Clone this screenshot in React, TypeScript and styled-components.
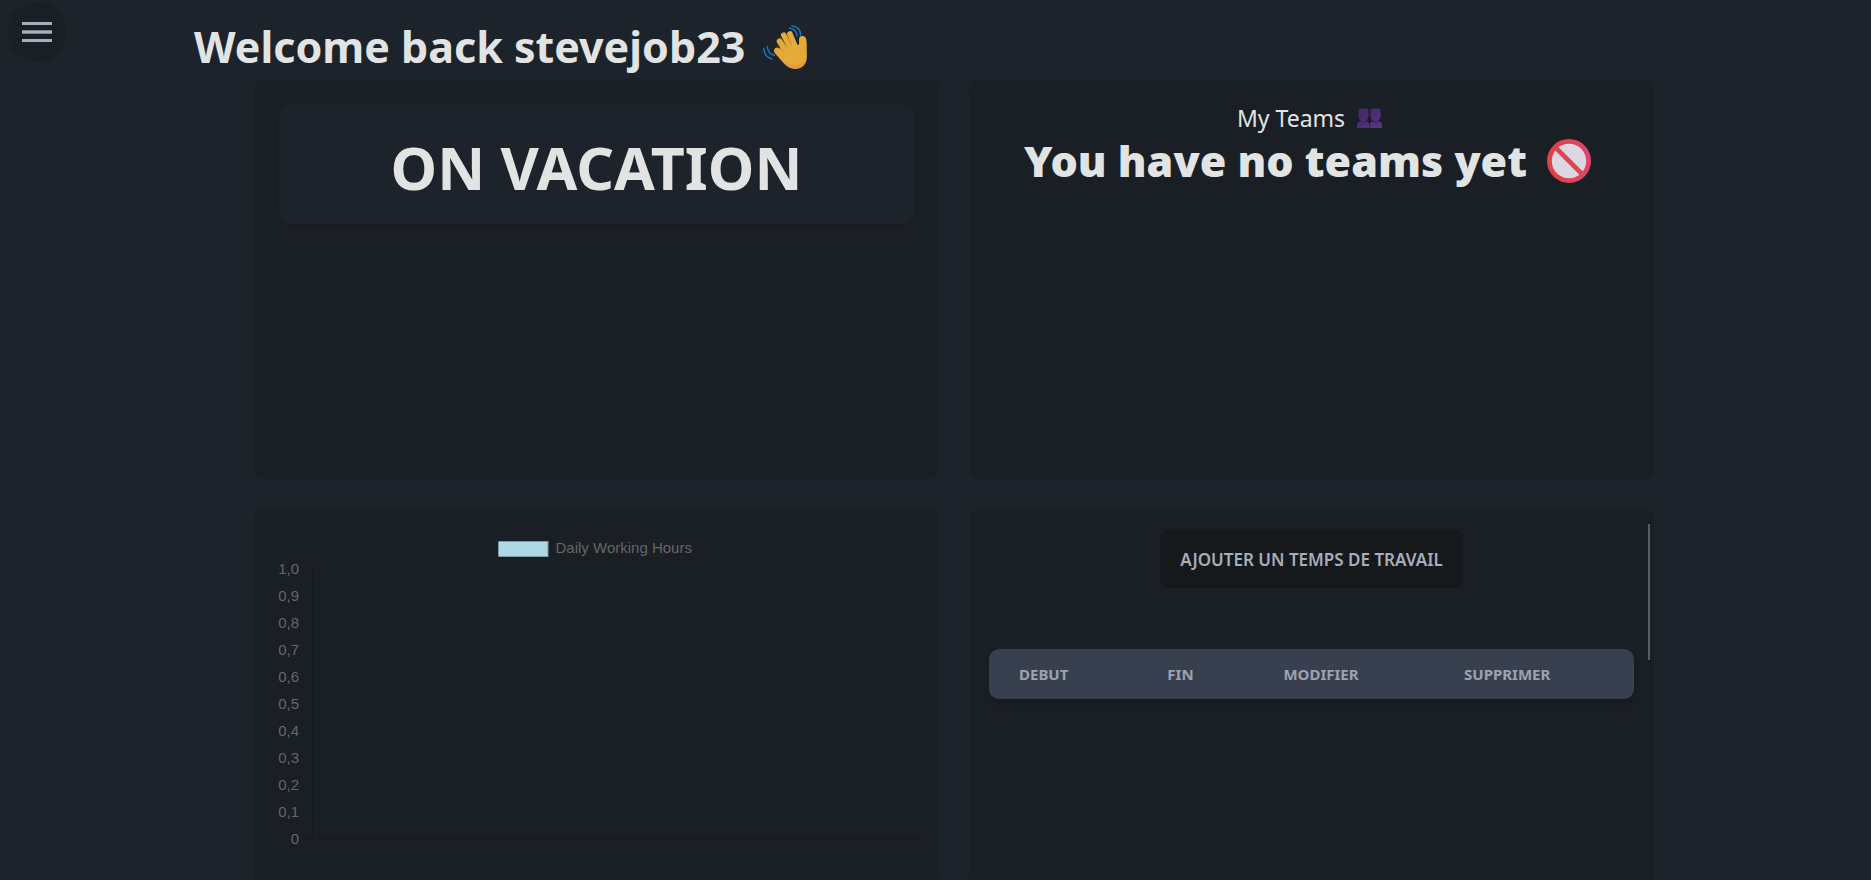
import React from 'react';
import styled, { createGlobalStyle } from 'styled-components';

const color = {
  page: '#1d232a',
  card: '#1a1e25',
  text: '#e2e4e4',
  muted: '#a6adbb',
  chartText: '#666666',
};

const GlobalStyle = createGlobalStyle`
  *, *::before, *::after { box-sizing: border-box; }
  body {
    margin: 0;
    background: ${color.page};
    color: ${color.text};
    font-family: 'Segoe UI', 'Noto Sans', sans-serif;
    font-size: 16px;
  }
`;

const Page = styled.div`
  height: 100vh;
  overflow: hidden;
  padding-left: 37px;
  border-bottom: 1px solid ${color.card};
`;

const MenuButton = styled.button`
  position: absolute;
  top: 2px;
  left: 7px;
  width: 60px;
  height: 60px;
  padding: 0;
  border: 0;
  border-radius: 50%;
  background: ${color.card};
  display: grid;
  place-items: center;
  cursor: pointer;
`;

const Header = styled.header`
  max-width: 1520px;
  margin: 0 auto;
  padding-top: 14px;
`;

const Title = styled.h1`
  display: flex;
  align-items: center;
  gap: 18px;
  margin: 0;
  font-size: 43px;
  line-height: 65px;
  font-weight: 700;
`;

const Board = styled.main`
  display: grid;
  grid-template-columns: 1fr 1fr;
  grid-auto-rows: 400px;
  gap: 30px;
  max-width: 1400px;
  margin: 0 auto;
`;

const Card = styled.section<{ $pad: string }>`
  position: relative;
  padding: ${(p) => p.$pad};
  border-radius: 10px;
  background: ${color.card};
`;

const Status = styled.div`
  display: flex;
  justify-content: center;
  align-items: center;
  height: 120px;
  padding-top: 5px;
  border-radius: 10px;
  background: ${color.page};
  box-shadow: 0 1px 2px rgba(0, 0, 0, 0.1);
  font-size: 59px;
  font-weight: 700;
`;

const TeamsTitle = styled.h2`
  display: flex;
  justify-content: center;
  align-items: center;
  gap: 12px;
  margin: 0;
  padding-right: 4px;
  font-size: 23px;
  line-height: 36px;
  font-weight: 400;
`;

const TeamsEmpty = styled.p`
  display: flex;
  justify-content: center;
  align-items: center;
  gap: 20px;
  margin: 0;
  padding-right: 8px;
  font-size: 43px;
  line-height: 50px;
  font-weight: 900;
`;

const ChartCanvas = styled.svg`
  display: block;
  width: 100%;
  height: 340px;
  overflow: visible;

  text {
    fill: ${color.chartText};
    font-family: 'Liberation Sans', Arial, sans-serif;
    font-size: 15px;
  }
`;

const AddButton = styled.button`
  display: block;
  height: 58px;
  margin: 0 auto 61px;
  padding: 0 20px;
  border: 0;
  border-radius: 8px;
  background: #16191c;
  color: ${color.muted};
  font-family: inherit;
  font-size: 17px;
  font-weight: 600;
  white-space: nowrap;
  cursor: pointer;
`;

const Times = styled.table`
  width: 100%;
  table-layout: fixed;
  border-collapse: collapse;
  border-radius: 10px;
  overflow: hidden;
  background: #384050;
  box-shadow: 0 4px 6px rgba(0, 0, 0, 0.12);
`;

const TimesHead = styled.th<{ $share: number }>`
  width: ${(p) => p.$share}%;
  height: 50px;
  padding: 0 0 0 30px;
  color: #9ca3af;
  font-size: 15px;
  font-weight: 700;
  text-align: left;
`;

const ScrollThumb = styled.div`
  position: absolute;
  top: 15px;
  right: 4px;
  width: 2px;
  height: 136px;
  background: #5a5c5e;
`;

const MenuIcon = () => (
  <svg width="30" height="20" viewBox="0 0 30 20" aria-hidden="true" fill={color.muted}>
    <path d="M0 0h30v3H0zM0 8.3h30v3.4H0zM0 17h30v3H0z" />
  </svg>
);

const WaveIcon = () => (
  <svg width="44" height="44" viewBox="0 0 44 44" role="img" aria-label="Waving hand">
    <defs>
      <radialGradient id="skin" gradientUnits="userSpaceOnUse" cx="31" cy="22" r="24">
        <stop offset="0" stopColor="#e3ab38" />
        <stop offset="0.7" stopColor="#e5aa3a" />
        <stop offset="1" stopColor="#d98a48" />
      </radialGradient>
    </defs>
    <g fill="none" stroke="#1b76bb" strokeWidth="1.5" strokeLinecap="round">
      <path d="M26.500 3.300c4 .3 7 3 7.500 7.500" />
      <path d="M29 .9c5 0 8.700 3.600 8.600 9" />
      <path d="M4.300 21.500c.2 4 3 7.600 7 8.800" />
      <path d="M.9 23.500c0 5 3.200 9 8 10.500" />
    </g>
    <g fill="none" stroke="url(#skin)" strokeWidth="5.600" strokeLinecap="round">
      <path d="M27 9l5.500 13.500" />
      <path d="M20.800 10.200l8 15" />
      <path d="M16.500 16.300l9 13" />
      <path d="M13.800 25.500l9 9" />
    </g>
    <path
      d="M11.200 27.500c2-3 5-4 9-6l11-5c2.500 3 3.500 4 4.500 3 1-1.500-.3-5 .8-7 1.500-2.200 5.500-2 6.500 1 1 3.500.8 7 .7 11-.1 5 .8 8-.6 12-2 5.500-6 7.500-10.500 7.500-5.500 0-8.600-2.500-11.600-5.500z"
      fill="url(#skin)"
    />
    <g fill="none" stroke="#c07f2c" strokeWidth="0.8" strokeLinecap="round" opacity="0.7">
      <path d="M24 10.500l4.500 9.500" />
      <path d="M18.600 14l5.500 8.500" />
      <path d="M14.800 20.500l5 5.500" />
    </g>
  </svg>
);

const PeopleIcon = () => (
  <svg width="25" height="20" viewBox="0 0 25 20" role="img" aria-label="People">
    <defs>
      <linearGradient id="people" gradientUnits="userSpaceOnUse" x1="4" y1="0" x2="20" y2="20">
        <stop offset="0" stopColor="#432768" />
        <stop offset="1" stopColor="#553482" />
      </linearGradient>
    </defs>
    <g fill="url(#people)">
      <path d="M3.500 .6h6c1.400 0 2 1 2 2.400v3c.8.300.6 2.200-.3 2.400-.3 2.600-1.600 4.300-2.900 5v.4H4.600v-.4c-1.300-.7-2.600-2.400-2.900-5C.8 8.200.6 6.300 1.500 6V3c0-1.400.6-2.400 2-2.400z" />
      <path d="M15.500 .6h6c1.400 0 2 1 2 2.400v3c.9.300.7 2.200-.2 2.400-.3 2.600-1.600 4.300-2.900 5v.4h-3.700v-.4c-1.300-.7-2.600-2.400-2.900-5-.9-.2-1.100-2.100-.3-2.400V3c0-1.400.6-2.400 2-2.400z" />
      <path d="M0 20v-2.800c0-2.400 1.500-3.900 3.800-3.900h5c2.200 0 3.500 1.500 3.500 3.900V20z" />
      <path d="M12.700 20v-2.800c0-2.400 1.300-3.900 3.500-3.900h5c2.300 0 3.800 1.500 3.800 3.900V20z" />
    </g>
    <path d="M3 12.800c2 1.300 4.700 1.300 6.700 0M15.300 12.800c2 1.300 4.700 1.300 6.700 0" fill="none" stroke="#33204f" strokeWidth="0.9" />
  </svg>
);

const ProhibitedIcon = () => (
  <svg width="44" height="44" viewBox="0 0 44 44" role="img" aria-label="None">
    <defs>
      <linearGradient id="ring" x1="0" y1="0" x2="1" y2="0">
        <stop offset="0" stopColor="#df4145" />
        <stop offset="1" stopColor="#df456a" />
      </linearGradient>
    </defs>
    <circle cx="22" cy="22" r="19" fill="#ddd6e3" />
    <path d="M9 9l26 26" stroke="#e04450" strokeWidth="4.600" />
    <circle cx="22" cy="22" r="19.600" fill="none" stroke="url(#ring)" strokeWidth="4.800" />
  </svg>
);

const ticks = ['1,0', '0,9', '0,8', '0,7', '0,6', '0,5', '0,4', '0,3', '0,2', '0,1', '0'];
const tickY = (i: number) => 39.5 + i * 27;

const HoursChart = () => (
  <ChartCanvas role="img" aria-label="Daily Working Hours">
    <svg x="50%" overflow="visible">
      <rect x="-98" y="12" width="50" height="16" fill="#7d9aa5" />
      <rect x="-98" y="13" width="49" height="14" fill="#add8e6" />
      <text x="-41" y="24">Daily Working Hours</text>
    </svg>
    {ticks.map((label, i) => (
      <g key={label}>
        <text x="25" y={tickY(i) + 5} textAnchor="end">{label}</text>
        <line
          x1="29"
          x2="100%"
          y1={tickY(i)}
          y2={tickY(i)}
          stroke="#14181a"
          strokeOpacity={i === ticks.length - 1 ? 0.8 : 0.4}
        />
      </g>
    ))}
    <line x1="38.5" x2="38.5" y1={tickY(0)} y2={tickY(10)} stroke="#14181a" strokeOpacity="0.7" />
  </ChartCanvas>
);

const columns = [
  { label: 'DEBUT', share: 23 },
  { label: 'FIN', share: 18 },
  { label: 'MODIFIER', share: 28 },
  { label: 'SUPPRIMER', share: 31 },
];

export default function App() {
  return (
    <>
      <GlobalStyle />
      <Page>
        <MenuButton type="button" aria-label="Menu">
          <MenuIcon />
        </MenuButton>
        <Header>
          <Title>
            Welcome back stevejob23
            <WaveIcon />
          </Title>
        </Header>
        <Board>
          <Card $pad="25px">
            <Status>ON VACATION</Status>
          </Card>
          <Card $pad="21px 20px">
            <TeamsTitle>
              My Teams
              <PeopleIcon />
            </TeamsTitle>
            <TeamsEmpty>
              You have no teams yet
              <ProhibitedIcon />
            </TeamsEmpty>
          </Card>
          <Card $pad="20px">
            <HoursChart />
          </Card>
          <Card $pad="21px 20px">
            <AddButton type="button">AJOUTER UN TEMPS DE TRAVAIL</AddButton>
            <Times>
              <thead>
                <tr>
                  {columns.map((c) => (
                    <TimesHead key={c.label} scope="col" $share={c.share}>
                      {c.label}
                    </TimesHead>
                  ))}
                </tr>
              </thead>
            </Times>
            <ScrollThumb />
          </Card>
        </Board>
      </Page>
    </>
  );
}
